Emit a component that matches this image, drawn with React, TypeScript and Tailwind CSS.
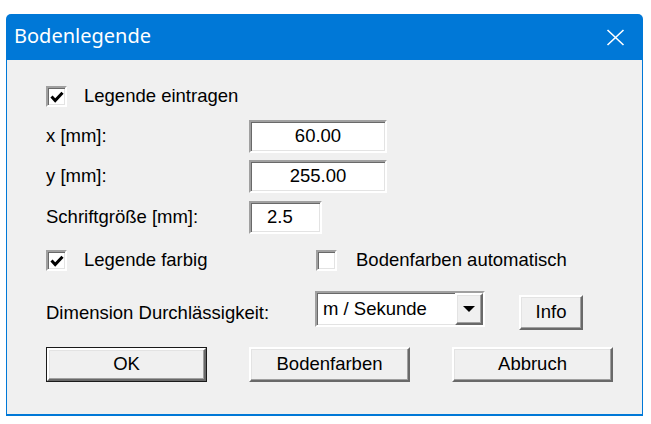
import React from 'react'

const sunken =
  'border-2 border-t-[#a0a0a0] border-l-[#a0a0a0] border-r-white border-b-white shadow-[inset_1px_1px_0_#696969,inset_-1px_-1px_0_#e3e3e3]'
const raised =
  'border-2 border-t-white border-l-white border-r-[#696969] border-b-[#696969] shadow-[inset_-1px_-1px_0_#a0a0a0,inset_1px_1px_0_#e3e3e3] bg-[#f0f0f0]'

const Check = ({ checked, label, gap = 'ml-[17px]' }: { checked: boolean; label: string; gap?: string }) => {
  return (
    <div className="flex items-center h-[21px]">
      <div className={`w-[21px] h-[21px] bg-white flex items-center justify-center ${sunken}`}>
        {checked && (
          <svg width="14" height="12" viewBox="0 0 14 12">
            <polyline points="1.5,5.5 5.2,9.5 12.5,1.8" fill="none" stroke="#000" strokeWidth="3" />
          </svg>
        )}
      </div>
      <span className={gap}>{label}</span>
    </div>
  )
}

const Field = ({ label, value, w, align }: { label: string; value: string; w: string; align: string }) => {
  return (
    <div className="flex items-center h-[33px]">
      <span className="w-[203px]">{label}</span>
      <div className={`h-[33px] bg-white flex items-center ${w} ${align} ${sunken}`}>{value}</div>
    </div>
  )
}

const Button = ({ label, def }: { label: string; def?: boolean }) => {
  return (
    <div className={`w-[161px] h-[35px] ${def ? 'border border-[#1a1a1a]' : ''}`}>
      <div className={`w-full h-full flex items-center justify-center ${raised}`}>{label}</div>
    </div>
  )
}

export default function App() {
  return (
    <div className="w-[651px] h-[424px] bg-white pt-[14px] pl-[6px]">
      <div className="w-[637px] h-[402px] rounded-t-[5px] overflow-hidden flex flex-col bg-[#0078d7]">
        <div className="h-[46px] flex items-center justify-between pl-[8px] pr-[18px] text-white font-['Noto_Sans',sans-serif] text-[20px]">
          <span className="pb-[2px]">Bodenlegende</span>
          <svg width="19" height="17" viewBox="0 0 19 17">
            <path d="M1.5 1 L17.5 16 M17.5 1 L1.5 16" stroke="#fff" strokeWidth="1.6" fill="none" />
          </svg>
        </div>
        <div className="flex-1 mx-[1px] mb-[2px] bg-[#f0f0f0] pl-[39px] text-black font-['Liberation_Sans',Arial,sans-serif] text-[18.5px] leading-none">
          <div className="mt-[26px]">
            <Check checked label="Legende eintragen" />
          </div>
          <div className="mt-[13px]">
            <Field label="x [mm]:" value="60.00" w="w-[138px]" align="justify-center" />
          </div>
          <div className="mt-[7px]">
            <Field label="y [mm]:" value="255.00" w="w-[138px]" align="justify-center" />
          </div>
          <div className="mt-[8px]">
            <Field label="Schriftgröße [mm]:" value="2.5" w="w-[73px]" align="pl-[16px]" />
          </div>
          <div className="mt-[16px] flex">
            <div className="w-[270px]">
              <Check checked label="Legende farbig" />
            </div>
            <Check checked={false} label="Bodenfarben automatisch" gap="ml-[19px]" />
          </div>
          <div className="mt-[20px] flex h-[39px]">
            <span className="w-[269px] pt-[13px]">Dimension Durchlässigkeit:</span>
            <div className={`w-[170px] h-[36px] bg-white flex items-center justify-between pl-[6px] pr-0 ${sunken}`}>
              <span>m / Sekunde</span>
              <div className={`w-[28px] h-[32px] flex items-center justify-center ${raised}`}>
                <svg width="12" height="6" viewBox="0 0 12 6">
                  <polygon points="0,0 12,0 6,6" fill="#000" />
                </svg>
              </div>
            </div>
            <div className={`ml-[34px] mt-[4px] w-[64px] h-[35px] flex items-center justify-center ${raised}`}>Info</div>
          </div>
          <div className="mt-[17px] flex gap-[42px]">
            <Button label="OK" def />
            <Button label="Bodenfarben" />
            <Button label="Abbruch" />
          </div>
        </div>
      </div>
    </div>
  )
}
